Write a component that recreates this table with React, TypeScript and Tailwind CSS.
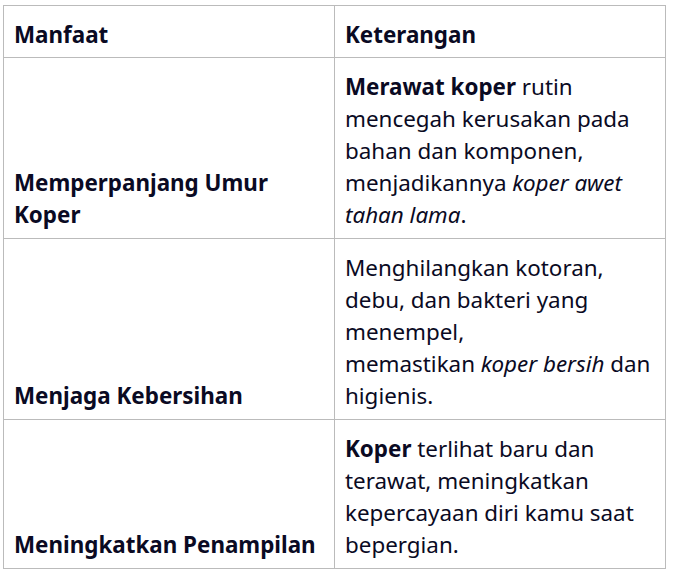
import React from 'react';

const rows = [
  {
    title: ['Memperpanjang Umur', 'Koper'],
    body: (
      <>
        <strong className="font-bold">Merawat koper</strong> rutin
        <br />
        mencegah kerusakan pada
        <br />
        bahan dan komponen,
        <br />
        menjadikannya <em>koper awet</em>
        <br />
        <em>tahan lama</em>.
      </>
    ),
  },
  {
    title: ['Menjaga Kebersihan'],
    body: (
      <>
        Menghilangkan kotoran,
        <br />
        debu, dan bakteri yang
        <br />
        menempel,
        <br />
        memastikan <em>koper bersih</em> dan
        <br />
        higienis.
      </>
    ),
  },
  {
    title: ['Meningkatkan Penampilan'],
    body: (
      <>
        <strong className="font-bold">Koper</strong> terlihat baru dan
        <br />
        terawat, meningkatkan
        <br />
        kepercayaan diri kamu saat
        <br />
        bepergian.
      </>
    ),
  },
];

export default function App() {
  return (
    <div className="min-h-[573px] bg-white pl-[3px] pt-[5px] font-['Noto_Sans',sans-serif] text-[22.4px] leading-[32px] text-[#0a0a23]">
      <table className="w-[663px] table-fixed border-collapse">
        <thead>
          <tr>
            <th className="w-1/2 border border-[#bbbbbb] px-[10px] pt-[13px] pb-[6px] text-left font-bold">Manfaat</th>
            <th className="w-1/2 border border-[#bbbbbb] px-[10px] pt-[13px] pb-[6px] text-left font-bold">Keterangan</th>
          </tr>
        </thead>
        <tbody>
          {rows.map((row, i) => (
            <tr key={i}>
              <td className="border border-[#bbbbbb] px-[10px] pt-[13px] pb-[7px] align-bottom font-bold whitespace-nowrap">
                {row.title.map((t, j) => (
                  <React.Fragment key={j}>
                    {j > 0 && <br />}
                    {t}
                  </React.Fragment>
                ))}
              </td>
              <td className="border border-[#bbbbbb] px-[10px] pt-[13px] pb-[7px] align-top whitespace-nowrap">{row.body}</td>
            </tr>
          ))}
        </tbody>
      </table>
    </div>
  );
}
